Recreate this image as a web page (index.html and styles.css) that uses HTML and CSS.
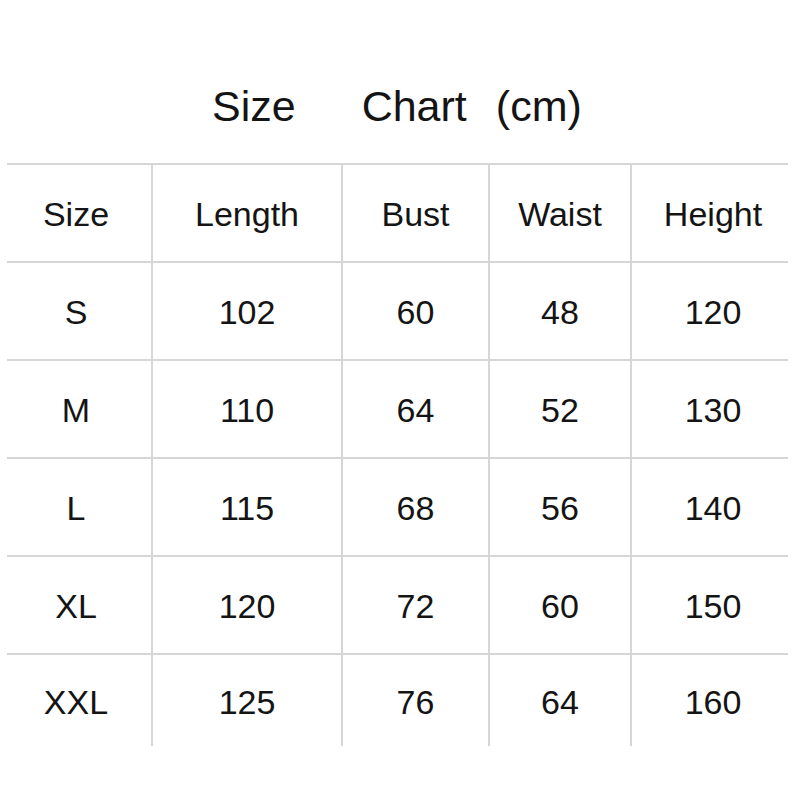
FILE: index.html
```html
<!DOCTYPE html>
<html>
<head>
<meta charset="utf-8">
<link rel="stylesheet" href="styles.css">
</head>
<body>
<div class="page">
  <h1 class="title"><span class="w1">Size</span><span class="w2">Chart</span><span class="w3">(cm)</span></h1>
  <div class="chart">
    <div class="cell first">Size</div><div class="cell">Length</div><div class="cell">Bust</div><div class="cell">Waist</div><div class="cell end">Height</div>
    <div class="cell first">S</div><div class="cell">102</div><div class="cell">60</div><div class="cell">48</div><div class="cell end">120</div>
    <div class="cell first">M</div><div class="cell">110</div><div class="cell">64</div><div class="cell">52</div><div class="cell end">130</div>
    <div class="cell first">L</div><div class="cell">115</div><div class="cell">68</div><div class="cell">56</div><div class="cell end">140</div>
    <div class="cell first">XL</div><div class="cell">120</div><div class="cell">72</div><div class="cell">60</div><div class="cell end">150</div>
    <div class="cell first last">XXL</div><div class="cell last">125</div><div class="cell last">76</div><div class="cell last">64</div><div class="cell last end">160</div>
  </div>
</div>
</body>
</html>
```

FILE: styles.css
```css
html, body {
  margin: 0;
  padding: 0;
  background: #ffffff;
}
.page {
  box-sizing: border-box;
  width: 800px;
  height: 800px;
  padding-top: 82px;
  overflow: hidden;
  font-family: "Liberation Sans", Arial, sans-serif;
  color: #141414;
}
.title {
  margin: 0;
  height: 48px;
  line-height: 48px;
  font-size: 43px;
  font-weight: normal;
  display: flex;
  padding-left: 212px;
}
.w2 { margin-left: 66px; }
.w3 { margin-left: 29px; }
.chart {
  margin: 33px 0 0 7px;
  width: 781px;
  display: grid;
  grid-template-columns: 144px 190px 147px 142px 158px;
  grid-auto-rows: 98px;
}
.cell {
  box-sizing: border-box;
  border-top: 2px solid #d6d6d6;
  border-left: 2px solid #d6d6d6;
  display: flex;
  align-items: center;
  justify-content: center;
  font-size: 34px;
  line-height: 40px;
  padding-top: 1px;
}
.cell.first {
  border-left: none;
  padding-right: 6px;
}
.cell.end {
  padding-left: 6px;
}
.cell.last {
  height: 93px;
  padding-top: 3px;
}
```
